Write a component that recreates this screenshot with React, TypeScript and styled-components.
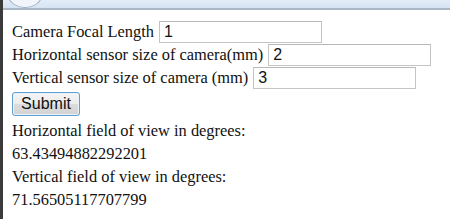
import React from "react";
import styled, { createGlobalStyle } from "styled-components";

const Global = createGlobalStyle`
  html, body { margin: 0; padding: 0; background: #ffffff; }
  body { width: 450px; height: 219px; overflow: hidden; }
`;

const Frame = styled.div`
  width: 450px;
  height: 219px;
  box-sizing: border-box;
  border-left: 3px solid #3b3b3b;
  display: flex;
  flex-direction: column;
  background: #fff;
`;

const TopBar = styled.div`
  position: relative;
  height: 8px;
  flex: none;
  background: linear-gradient(#e3ecf8, #d6e3f3);
  border-bottom: 2px solid #a9b6c6;
  overflow: hidden;
`;

const BackCircle = styled.div`
  position: absolute;
  left: 4px;
  top: -22px;
  width: 34px;
  height: 28px;
  border-radius: 50%;
  border: 1px solid #9fb0c4;
  background: #f1f5fb;
`;

const Content = styled.main`
  padding: 10px 0 0 9px;
  font-family: "Liberation Serif", "Times New Roman", serif;
  font-size: 16.4px;
  color: #111;
  display: flex;
  flex-direction: column;
  align-items: flex-start;
`;

const Row = styled.label`
  display: flex;
  align-items: center;
  gap: 5px;
  height: 23px;
  white-space: nowrap;
`;

const Field = styled.input`
  box-sizing: border-box;
  width: 163px;
  height: 22px;
  border: 1px solid #c4c4c4;
  border-top-color: #b8b8b8;
  padding: 0 4px;
  font-family: "Liberation Sans", Arial, sans-serif;
  font-size: 16px;
  color: #111;
  background: #fff;
  outline: none;
`;

const SubmitButton = styled.button`
  margin-top: 3px;
  box-sizing: border-box;
  width: 68px;
  height: 24px;
  border: 1px solid #5e9fd0;
  border-radius: 3px;
  background: linear-gradient(#f4f4f4 0%, #ececec 50%, #dcdcdc 51%, #d3d3d3 100%);
  box-shadow: inset 0 0 0 1px #e9f3fb;
  font-family: "Liberation Sans", Arial, sans-serif;
  font-size: 16px;
  color: #111;
  padding: 0;
`;

const Results = styled.div`
  margin-top: 3px;
  line-height: 23px;
`;

const Line = styled.div`
  white-space: nowrap;
`;

export default function App() {
  return (
    <>
      <Global />
      <Frame>
        <TopBar>
          <BackCircle />
        </TopBar>
        <Content>
          <Row>
            Camera Focal Length <Field defaultValue="1" />
          </Row>
          <Row>
            Horizontal sensor size of camera(mm) <Field defaultValue="2" />
          </Row>
          <Row>
            Vertical sensor size of camera (mm) <Field defaultValue="3" />
          </Row>
          <SubmitButton type="button">Submit</SubmitButton>
          <Results>
            <Line>Horizontal field of view in degrees:</Line>
            <Line>63.43494882292201</Line>
            <Line>Vertical field of view in degrees:</Line>
            <Line>71.56505117707799</Line>
          </Results>
        </Content>
      </Frame>
    </>
  );
}
